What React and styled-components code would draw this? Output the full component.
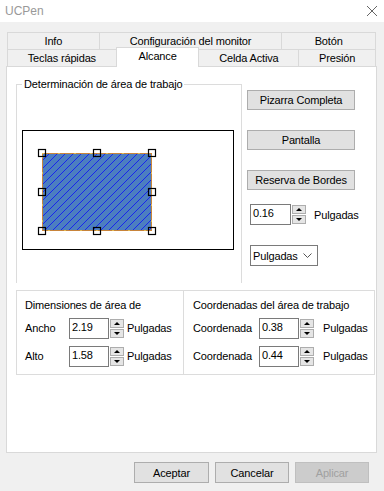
import styled, { createGlobalStyle } from "styled-components";

const GlobalStyle = createGlobalStyle`
  html, body {
    margin: 0;
    padding: 0;
    background: #f0f0f0;
  }
  body {
    font-family: "Liberation Sans", Arial, sans-serif;
    font-size: 11px;
    letter-spacing: -0.15px;
    color: #000;
  }
`;

const Window = styled.div`
  width: 384px;
  height: 491px;
  background: #f0f0f0;
  display: flex;
  flex-direction: column;
  overflow: hidden;
`;

const TitleBar = styled.div`
  height: 22px;
  background: #fff;
  display: flex;
  align-items: center;
  justify-content: space-between;
  padding: 0 6px 0 5px;
  color: #999;
  font-size: 12px;
  letter-spacing: 0;
`;

const Close = styled.svg`
  width: 12px;
  height: 12px;
`;

const Body = styled.div`
  padding: 10px 8px 0 6px;
  display: flex;
  flex-direction: column;
`;

const TabRows = styled.div`
  display: flex;
  flex-direction: column;
  margin-left: 1px;
  position: relative;
  z-index: 1;
`;

const TabRow = styled.div`
  display: flex;
  height: 17px;
`;

const Tab = styled.div`
  width: ${(p) => p.$w}px;
  box-sizing: border-box;
  border: 1px solid #d9d9d9;
  border-left: ${(p) => (p.$first ? "1px solid #d9d9d9" : "none")};
  border-bottom: none;
  background: #f0f0f0;
  display: flex;
  align-items: center;
  justify-content: center;
  white-space: nowrap;
`;

const ActiveTab = styled(Tab)`
  background: #fff;
  height: 20px;
  margin-top: -2px;
  border-left: 1px solid #d9d9d9;
  margin-left: -1px;
  padding-bottom: 3px;
`;

const Panel = styled.div`
  width: 371px;
  height: 387px;
  box-sizing: border-box;
  background: #fff;
  border: 1px solid #d9d9d9;
  padding: 10px 0 0 9px;
  display: flex;
  flex-direction: column;
`;

const Upper = styled.div`
  display: flex;
  gap: 5px;
`;

const GroupBox = styled.fieldset`
  margin: 0;
  width: 226px;
  height: 206px;
  box-sizing: border-box;
  border: 1px solid #dcdcdc;
  border-bottom: none;
  padding: 0 0 0 5px;
`;

const Legend = styled.legend`
  padding: 0 2px;
  margin-left: 0;
  line-height: 14px;
`;

const Frame = styled.div`
  margin-top: 39px;
  width: 212px;
  height: 120px;
  box-sizing: border-box;
  border: 1px solid #000;
`;

const RightCol = styled.div`
  display: flex;
  flex-direction: column;
  padding-top: 13px;
`;

const Button = styled.div`
  width: ${(p) => p.$w || 108}px;
  height: ${(p) => p.$h || 20}px;
  box-sizing: border-box;
  background: ${(p) => (p.$disabled ? "#cccccc" : "#e1e1e1")};
  border: 1px solid ${(p) => (p.$disabled ? "#bfbfbf" : "#adadad")};
  color: ${(p) => (p.$disabled ? "#a0a0a0" : "#000")};
  display: flex;
  align-items: center;
  justify-content: center;
  margin-bottom: ${(p) => p.$mb || 0}px;
`;

const SpinRow = styled.div`
  display: flex;
  align-items: center;
  margin-left: 3px;
`;

const SpinInput = styled.div`
  width: ${(p) => p.$w || 41}px;
  height: 21px;
  box-sizing: border-box;
  border: 1px solid #7a7a7a;
  padding: 2px 0 0 2px;
  display: flex;
  align-items: flex-start;
  background: #fff;
`;

const SpinButtons = styled.div`
  width: 14px;
  height: 19px;
  margin-left: 1px;
  display: flex;
  flex-direction: column;
  gap: 1px;
`;

const SpinBtn = styled.div`
  flex: 1;
  box-sizing: border-box;
  background: #e5e5e5;
  border: 1px solid #adadad;
  display: flex;
  align-items: center;
  justify-content: center;
`;

const Arrow = styled.div`
  width: 0;
  height: 0;
  border-left: 3px solid transparent;
  border-right: 3px solid transparent;
  ${(p) =>
    p.$up ? "border-bottom: 3px solid #000;" : "border-top: 3px solid #000;"}
`;

const Unit = styled.span`
  margin-left: ${(p) => p.$ml}px;
`;

const Select = styled.div`
  width: 68px;
  height: 21px;
  box-sizing: border-box;
  border: 1px solid #7a7a7a;
  display: flex;
  align-items: center;
  justify-content: space-between;
  padding: 0 5px 0 2px;
  margin-left: 3px;
  margin-top: 20px;
`;

const Lower = styled.div`
  display: grid;
  grid-template-columns: 168px 191px;
  margin-top: 7px;
`;

const Box = styled.div`
  height: 85px;
  box-sizing: border-box;
  border: 1px solid #dcdcdc;
  margin-left: ${(p) => (p.$right ? "-1px" : "0")};
  padding: 8px 0 0 ${(p) => (p.$right ? 9 : 8)}px;
  display: flex;
  flex-direction: column;
`;

const BoxTitle = styled.div`
  height: 15px;
  margin-bottom: 3px;
`;

const FieldRow = styled.div`
  display: flex;
  align-items: center;
  height: 22px;
  margin-bottom: 6px;
`;

const FieldLabel = styled.span`
  width: ${(p) => p.$w}px;
`;

const Footer = styled.div`
  display: flex;
  justify-content: flex-end;
  gap: 6px;
  padding: 9px 7px 0 0;
`;

function Spinner({ value, w, unitMl }) {
  return (
    <>
      <SpinInput $w={w}>{value}</SpinInput>
      <SpinButtons>
        <SpinBtn>
          <Arrow $up />
        </SpinBtn>
        <SpinBtn>
          <Arrow />
        </SpinBtn>
      </SpinButtons>
      <Unit $ml={unitMl}>Pulgadas</Unit>
    </>
  );
}

function Preview() {
  const x = 19;
  const y = 22;
  const w = 110;
  const h = 78;
  const handles = [
    [x, y], [x + w / 2, y], [x + w, y],
    [x, y + h / 2], [x + w, y + h / 2],
    [x, y + h], [x + w / 2, y + h], [x + w, y + h],
  ];
  const hatch = [];
  for (let k = -h; k < w; k += 8) {
    hatch.push(
      <line
        key={k}
        x1={x + k}
        y1={y + h}
        x2={x + k + h}
        y2={y}
        stroke="#0000ff"
        strokeWidth="0.7"
      />
    );
  }
  return (
    <svg width="210" height="118" style={{ display: "block" }}>
      <defs>
        <clipPath id="area">
          <rect x={x} y={y} width={w} height={h} />
        </clipPath>
      </defs>
      <rect x={x} y={y} width={w} height={h} fill="#4c7ec0" />
      <g clipPath="url(#area)">{hatch}</g>
      <rect x={x + 0.5} y={y + 0.5} width={w - 1} height={h - 1} fill="none" stroke="#c8843a" strokeWidth="1" />
      <rect x={x + 0.5} y={y + 0.5} width={w - 1} height={h - 1} fill="none" stroke="#ffee66" strokeWidth="1" strokeDasharray="1 15" />
      {handles.map(([hx, hy], i) => (
        <rect key={i} x={hx - 3.5} y={hy - 3.5} width="7" height="7" fill="none" stroke="#000" strokeWidth="1.2" />
      ))}
    </svg>
  );
}

export default function App() {
  return (
    <>
      <GlobalStyle />
      <Window>
        <TitleBar>
          <span>UCPen</span>
          <Close viewBox="0 0 12 12">
            <path d="M1 1 L11 11 M11 1 L1 11" stroke="#666" strokeWidth="1" />
          </Close>
        </TitleBar>
        <Body>
          <TabRows>
            <TabRow>
              <Tab $w={93} $first>Info</Tab>
              <Tab $w={183}>Configuración del monitor</Tab>
              <Tab $w={94}>Botón</Tab>
            </TabRow>
            <TabRow>
              <Tab $w={110} $first>Teclas rápidas</Tab>
              <ActiveTab $w={84}>Alcance</ActiveTab>
              <Tab $w={100}>Celda Activa</Tab>
              <Tab $w={77}>Presión</Tab>
            </TabRow>
          </TabRows>
          <Panel>
            <Upper>
              <GroupBox>
                <Legend>Determinación de área de trabajo</Legend>
                <Frame>
                  <Preview />
                </Frame>
              </GroupBox>
              <RightCol>
                <Button $mb={20}>Pizarra Completa</Button>
                <Button $mb={20}>Pantalla</Button>
                <Button $mb={14}>Reserva de Bordes</Button>
                <SpinRow>
                  <Spinner value="0.16" w={41} unitMl={8} />
                </SpinRow>
                <Select>
                  <span>Pulgadas</span>
                  <svg width="9" height="6" viewBox="0 0 9 6">
                    <path d="M0.5 0.5 L4.5 4.5 L8.5 0.5" fill="none" stroke="#555" strokeWidth="1" />
                  </svg>
                </Select>
              </RightCol>
            </Upper>
            <Lower>
              <Box>
                <BoxTitle>Dimensiones de área de</BoxTitle>
                <FieldRow>
                  <FieldLabel $w={44}>Ancho</FieldLabel>
                  <Spinner value="2.19" w={40} unitMl={3} />
                </FieldRow>
                <FieldRow>
                  <FieldLabel $w={44}>Alto</FieldLabel>
                  <Spinner value="1.58" w={40} unitMl={3} />
                </FieldRow>
              </Box>
              <Box $right>
                <BoxTitle>Coordenadas del área de trabajo</BoxTitle>
                <FieldRow>
                  <FieldLabel $w={66}>Coordenada</FieldLabel>
                  <Spinner value="0.38" w={40} unitMl={9} />
                </FieldRow>
                <FieldRow>
                  <FieldLabel $w={66}>Coordenada</FieldLabel>
                  <Spinner value="0.44" w={40} unitMl={9} />
                </FieldRow>
              </Box>
            </Lower>
          </Panel>
          <Footer>
            <Button $w={75} $h={21}>Aceptar</Button>
            <Button $w={74} $h={21}>Cancelar</Button>
            <Button $w={74} $h={21} $disabled>Aplicar</Button>
          </Footer>
        </Body>
      </Window>
    </>
  );
}
